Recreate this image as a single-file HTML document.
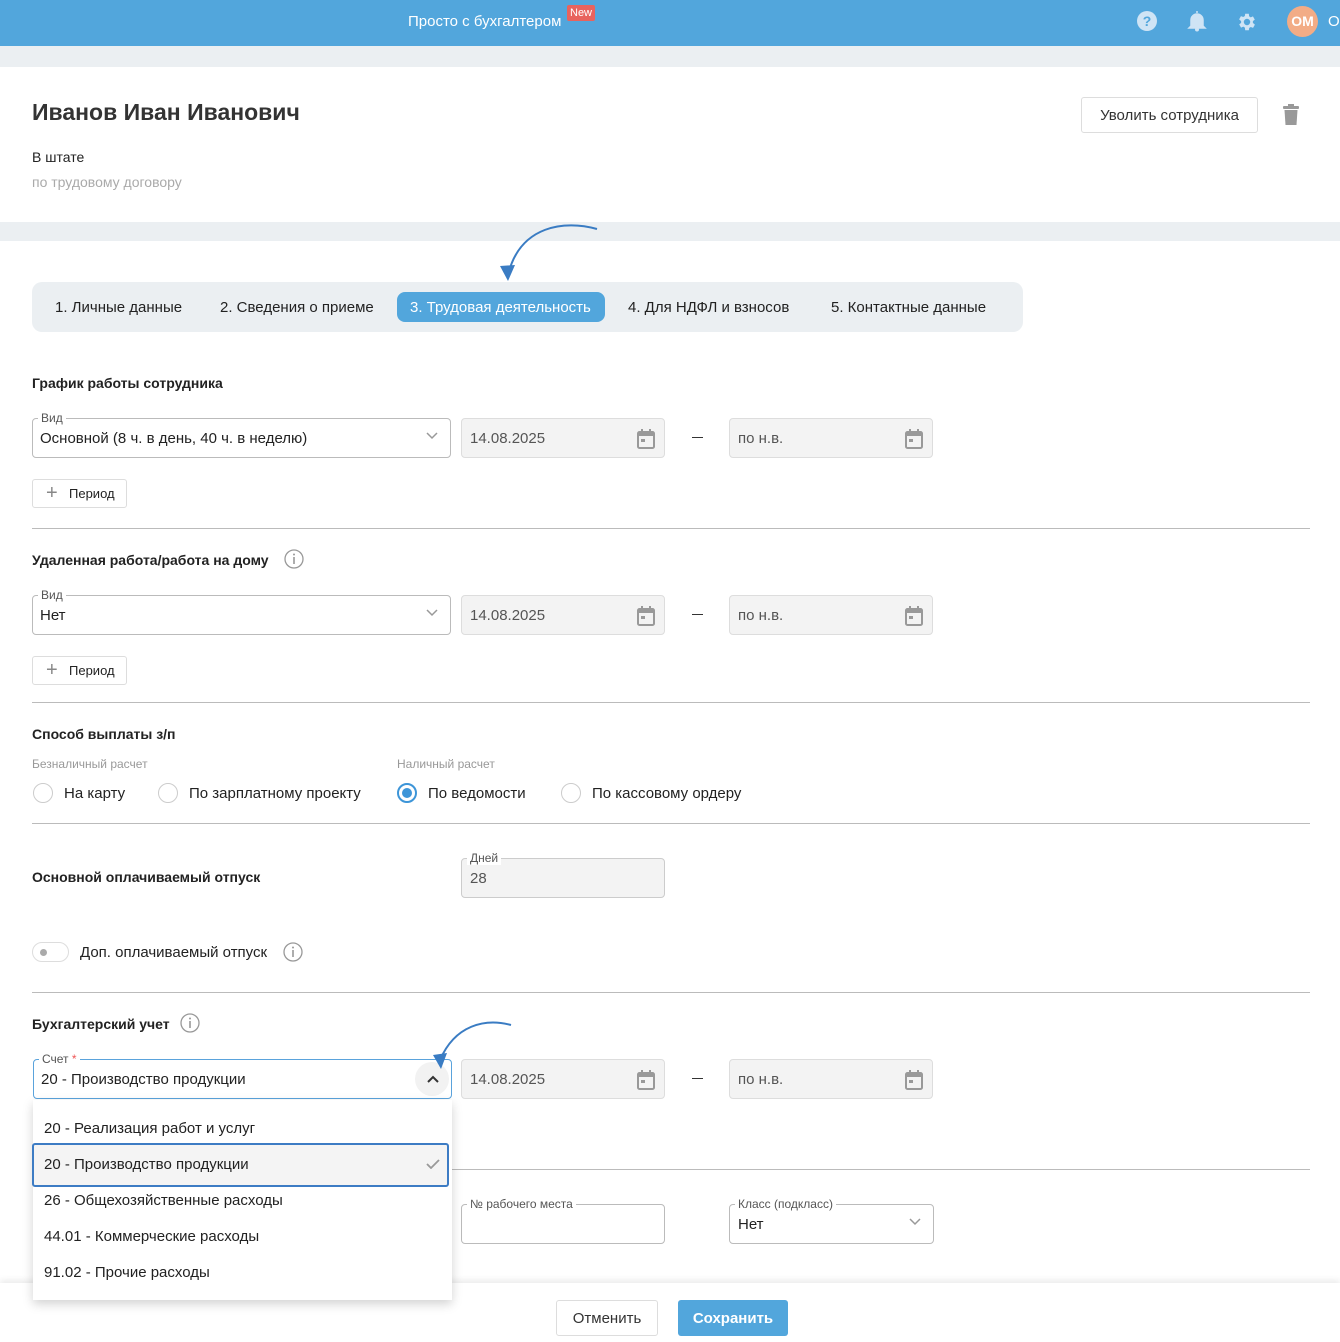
<!DOCTYPE html>
<html><head><meta charset="utf-8"><style>
*{box-sizing:border-box;margin:0;padding:0}
body{width:1340px;height:1342px;position:relative;overflow:hidden;background:#fff;font-family:"Liberation Sans",Arial,sans-serif;color:#222;font-size:15px}
.a{position:absolute}
.hdr{left:0;top:0;width:1340px;height:46px;background:#52a6dc}
.band{left:0;width:1340px;background:#ebeff2}
.h{font-weight:bold;font-size:14px;color:#222}
.sel{border:1px solid #bbb;border-radius:4px;background:#fff}
.lbl{font-size:12px;color:#555;background:#fff;padding:0 3px;position:absolute;top:-8px;left:5px;line-height:14px}
.date{border:1px solid #ddd;border-radius:4px;background:#f3f3f3;width:204px;height:40px}
.date span{position:absolute;left:8px;top:11px;color:#555;font-size:15px}
.cal{position:absolute;right:9px;top:10px}
.div{height:1px;background:#bbb;left:32px;width:1278px}
.per{border:1px solid #ddd;border-radius:3px;width:95px;height:29px;font-size:13px}
.per i{position:absolute;left:13px;top:6px;font-style:normal;color:#888;font-size:20px;line-height:14px}
.per span{position:absolute;left:36px;top:6px}
.chev{position:absolute;right:12px;top:13px}
.radio{width:20px;height:20px;border:1px solid #ccc;border-radius:50%}
.sub{font-size:12px;color:#999}
.tab{top:292px;height:30px;line-height:31px;font-size:15px;padding:0 13px;border-radius:8px}
.dash{width:11px;height:1px;background:#333}
</style></head><body>
<div class="a hdr"></div>
<div class="a" style="left:408px;top:13px;color:#fff;font-size:15px">Просто с бухгалтером</div>
<div class="a" style="left:567px;top:5px;background:#e8635e;color:#fff;font-size:11px;padding:1px 3px;border-radius:2px;line-height:14px">New</div>
<svg class="a" style="left:1136px;top:10px" width="22" height="22"><circle cx="11" cy="11" r="10" fill="#cfe4f5"/><text x="11" y="16" font-size="14" font-weight="bold" text-anchor="middle" fill="#52a6dc" font-family="Liberation Sans">?</text></svg>
<svg class="a" style="left:1187px;top:10px" width="20" height="22"><path d="M10 1v2M4 16V10a6 6 0 0 1 12 0v6l2 2H2z" fill="#cfe4f5" stroke="#cfe4f5" stroke-width="1.5"/><circle cx="10" cy="19.5" r="2" fill="#cfe4f5"/></svg>
<svg class="a" style="left:1236px;top:11px" width="22" height="22" viewBox="0 0 24 24"><path fill="#cfe4f5" d="M19.4 13a7.5 7.5 0 0 0 0-2l2.1-1.6-2-3.5-2.5 1a7 7 0 0 0-1.7-1L15 3h-4l-.4 2.6a7 7 0 0 0-1.7 1l-2.5-1-2 3.5L6.6 11a7.5 7.5 0 0 0 0 2l-2.1 1.6 2 3.5 2.5-1a7 7 0 0 0 1.7 1L11 21h4l.4-2.6a7 7 0 0 0 1.7-1l2.5 1 2-3.5zM13 15.5a3.5 3.5 0 1 1 0-7 3.5 3.5 0 0 1 0 7z" transform="translate(-1 0)"/></svg>
<div class="a" style="left:1287px;top:6px;width:31px;height:31px;border-radius:50%;background:#f2ac86;color:#fff;font-weight:bold;font-size:14px;text-align:center;line-height:31px">OM</div>
<div class="a" style="left:1328px;top:13px;color:#fff;font-size:15px">О</div>

<div class="a band" style="top:46px;height:21px"></div>
<div class="a band" style="top:222px;height:19px"></div>

<div class="a" style="left:32px;top:99px;font-size:23px;font-weight:bold;color:#333">Иванов Иван Иванович</div>
<div class="a" style="left:32px;top:149px;font-size:14px">В штате</div>
<div class="a" style="left:32px;top:174px;font-size:14px;color:#aaa">по трудовому договору</div>
<div class="a" style="left:1081px;top:97px;width:177px;height:36px;border:1px solid #ddd;border-radius:3px;text-align:center;line-height:35px;font-size:15px;color:#333">Уволить сотрудника</div>
<svg class="a" style="left:1282px;top:104px" width="18" height="22"><rect x="1" y="2" width="16" height="3" rx="1" fill="#999"/><rect x="6" y="0" width="6" height="3" fill="#999"/><path d="M2.5 6h13l-1 15h-11z" fill="#999"/></svg>

<svg class="a" style="left:495px;top:220px" width="110" height="65"><path d="M102 9C70 0 25 5 13 55" fill="none" stroke="#3a7cc3" stroke-width="2"/><path d="M5 46l8 15 7-16z" fill="#3a7cc3"/></svg>

<div class="a" style="left:32px;top:282px;width:991px;height:50px;background:#ebeff2;border-radius:10px"></div>
<div class="a tab" style="left:42px">1. Личные данные</div>
<div class="a tab" style="left:207px">2. Сведения о приеме</div>
<div class="a tab" style="left:397px;width:208px;background:#52a6dc;color:#fff">3. Трудовая деятельность</div>
<div class="a tab" style="left:615px">4. Для НДФЛ и взносов</div>
<div class="a tab" style="left:818px">5. Контактные данные</div>

<div class="a h" style="left:32px;top:375px">График работы сотрудника</div>
<div class="a sel" style="left:32px;top:418px;width:419px;height:40px"><div class="lbl">Вид</div><span style="position:absolute;left:7px;top:11px">Основной (8 ч. в день, 40 ч. в неделю)</span><svg class="chev" width="12" height="8"><path d="M1 1l5 5 5-5" fill="none" stroke="#999" stroke-width="1.5"/></svg></div>
<div class="a date" style="left:461px;top:418px"><span>14.08.2025</span><svg class="cal" width="18" height="20"><rect x="1" y="3" width="16" height="16" rx="1.5" fill="none" stroke="#999" stroke-width="2"/><rect x="1" y="3" width="16" height="4" fill="#999"/><rect x="4" y="0" width="2" height="4" fill="#999"/><rect x="12" y="0" width="2" height="4" fill="#999"/><rect x="4" y="10" width="4" height="3" fill="#999"/></svg></div>
<div class="a dash" style="left:692px;top:437px"></div>
<div class="a date" style="left:729px;top:418px"><span>по н.в.</span><svg class="cal" width="18" height="20"><rect x="1" y="3" width="16" height="16" rx="1.5" fill="none" stroke="#999" stroke-width="2"/><rect x="1" y="3" width="16" height="4" fill="#999"/><rect x="4" y="0" width="2" height="4" fill="#999"/><rect x="12" y="0" width="2" height="4" fill="#999"/><rect x="4" y="10" width="4" height="3" fill="#999"/></svg></div>
<div class="a per" style="left:32px;top:479px"><i>+</i><span>Период</span></div>
<div class="a div" style="top:528px"></div>

<div class="a h" style="left:32px;top:552px">Удаленная работа/работа на дому</div>
<svg class="a" style="left:284px;top:549px" width="20" height="20"><circle cx="10" cy="10" r="9" fill="none" stroke="#999" stroke-width="1.3"/><rect x="9.2" y="8" width="1.6" height="7" fill="#999"/><circle cx="10" cy="5.5" r="1" fill="#999"/></svg>
<div class="a sel" style="left:32px;top:595px;width:419px;height:40px"><div class="lbl">Вид</div><span style="position:absolute;left:7px;top:11px">Нет</span><svg class="chev" width="12" height="8"><path d="M1 1l5 5 5-5" fill="none" stroke="#999" stroke-width="1.5"/></svg></div>
<div class="a date" style="left:461px;top:595px"><span>14.08.2025</span><svg class="cal" width="18" height="20"><rect x="1" y="3" width="16" height="16" rx="1.5" fill="none" stroke="#999" stroke-width="2"/><rect x="1" y="3" width="16" height="4" fill="#999"/><rect x="4" y="0" width="2" height="4" fill="#999"/><rect x="12" y="0" width="2" height="4" fill="#999"/><rect x="4" y="10" width="4" height="3" fill="#999"/></svg></div>
<div class="a dash" style="left:692px;top:614px"></div>
<div class="a date" style="left:729px;top:595px"><span>по н.в.</span><svg class="cal" width="18" height="20"><rect x="1" y="3" width="16" height="16" rx="1.5" fill="none" stroke="#999" stroke-width="2"/><rect x="1" y="3" width="16" height="4" fill="#999"/><rect x="4" y="0" width="2" height="4" fill="#999"/><rect x="12" y="0" width="2" height="4" fill="#999"/><rect x="4" y="10" width="4" height="3" fill="#999"/></svg></div>
<div class="a per" style="left:32px;top:656px"><i>+</i><span>Период</span></div>
<div class="a div" style="top:702px"></div>

<div class="a h" style="left:32px;top:726px">Способ выплаты з/п</div>
<div class="a sub" style="left:32px;top:757px">Безналичный расчет</div>
<div class="a sub" style="left:397px;top:757px">Наличный расчет</div>
<div class="a radio" style="left:33px;top:783px"></div><div class="a" style="left:64px;top:785px">На карту</div>
<div class="a radio" style="left:158px;top:783px"></div><div class="a" style="left:189px;top:785px">По зарплатному проекту</div>
<div class="a radio" style="left:397px;top:783px;border:2px solid #3d95d8"><div style="position:absolute;left:3px;top:3px;width:10px;height:10px;border-radius:50%;background:#3d95d8"></div></div><div class="a" style="left:428px;top:785px">По ведомости</div>
<div class="a radio" style="left:561px;top:783px"></div><div class="a" style="left:592px;top:785px">По кассовому ордеру</div>
<div class="a div" style="top:823px"></div>

<div class="a h" style="left:32px;top:869px">Основной оплачиваемый отпуск</div>
<div class="a date" style="left:461px;top:858px;border-color:#ccc"><div class="lbl" style="color:#555">Дней</div><span style="top:11px">28</span></div>
<div class="a" style="left:32px;top:942px;width:37px;height:20px;border:1px solid #ddd;border-radius:10px"><div style="position:absolute;left:7px;top:6px;width:7px;height:7px;border-radius:50%;background:#aaa"></div></div>
<div class="a" style="left:80px;top:944px">Доп. оплачиваемый отпуск</div>
<svg class="a" style="left:283px;top:942px" width="20" height="20"><circle cx="10" cy="10" r="9" fill="none" stroke="#999" stroke-width="1.3"/><rect x="9.2" y="8" width="1.6" height="7" fill="#999"/><circle cx="10" cy="5.5" r="1" fill="#999"/></svg>
<div class="a div" style="top:992px"></div>

<div class="a h" style="left:32px;top:1016px">Бухгалтерский учет</div>
<svg class="a" style="left:180px;top:1013px" width="20" height="20"><circle cx="10" cy="10" r="9" fill="none" stroke="#999" stroke-width="1.3"/><rect x="9.2" y="8" width="1.6" height="7" fill="#999"/><circle cx="10" cy="5.5" r="1" fill="#999"/></svg>
<div class="a sel" style="left:33px;top:1059px;width:419px;height:40px;border-color:#5aa3dc"><div class="lbl">Счет <span style="color:#e55">*</span></div><span style="position:absolute;left:7px;top:11px">20 - Производство продукции</span><div style="position:absolute;right:2px;top:2px;width:34px;height:34px;border-radius:50%;background:#f2f2f2"></div><svg class="chev" width="12" height="8" style="top:15px;right:12px"><path d="M1 7l5-5 5 5" fill="none" stroke="#333" stroke-width="2"/></svg></div>
<svg class="a" style="left:425px;top:1015px" width="95" height="60"><path d="M86 10C60 3 30 10 15 45" fill="none" stroke="#3a7cc3" stroke-width="2"/><path d="M8 40l8 14 6-16z" fill="#3a7cc3"/></svg>
<div class="a date" style="left:461px;top:1059px"><span>14.08.2025</span><svg class="cal" width="18" height="20"><rect x="1" y="3" width="16" height="16" rx="1.5" fill="none" stroke="#999" stroke-width="2"/><rect x="1" y="3" width="16" height="4" fill="#999"/><rect x="4" y="0" width="2" height="4" fill="#999"/><rect x="12" y="0" width="2" height="4" fill="#999"/><rect x="4" y="10" width="4" height="3" fill="#999"/></svg></div>
<div class="a dash" style="left:692px;top:1078px"></div>
<div class="a date" style="left:729px;top:1059px"><span>по н.в.</span><svg class="cal" width="18" height="20"><rect x="1" y="3" width="16" height="16" rx="1.5" fill="none" stroke="#999" stroke-width="2"/><rect x="1" y="3" width="16" height="4" fill="#999"/><rect x="4" y="0" width="2" height="4" fill="#999"/><rect x="12" y="0" width="2" height="4" fill="#999"/><rect x="4" y="10" width="4" height="3" fill="#999"/></svg></div>
<div class="a div" style="top:1169px"></div>

<div class="a sel" style="left:461px;top:1204px;width:204px;height:40px"><div class="lbl">№ рабочего места</div></div>
<div class="a sel" style="left:729px;top:1204px;width:205px;height:40px"><div class="lbl">Класс (подкласс)</div><span style="position:absolute;left:8px;top:11px">Нет</span><svg class="chev" width="12" height="8"><path d="M1 1l5 5 5-5" fill="none" stroke="#999" stroke-width="1.5"/></svg></div>

<div class="a" style="left:0;top:1283px;width:1340px;height:59px;background:#fff;box-shadow:0 -3px 6px rgba(0,0,0,.08)"></div>
<div class="a" style="left:556px;top:1300px;width:102px;height:36px;border:1px solid #ddd;border-radius:3px;text-align:center;line-height:35px;font-size:15px;color:#333">Отменить</div>
<div class="a" style="left:678px;top:1300px;width:110px;height:36px;background:#52a6dc;border-radius:3px;text-align:center;line-height:37px;font-size:15px;color:#fff;font-weight:bold">Сохранить</div>

<div class="a" style="left:33px;top:1100px;width:419px;height:200px;background:#fff;box-shadow:0 4px 10px rgba(0,0,0,.18)"></div>
<div class="a" style="left:44px;top:1120px">20 - Реализация работ и услуг</div>
<div class="a" style="left:32px;top:1143px;width:417px;height:44px;background:#f4f4f4;border:2px solid #3d7cc4;border-radius:3px"></div>
<div class="a" style="left:44px;top:1156px">20 - Производство продукции</div>
<svg class="a" style="left:426px;top:1158px" width="14" height="11"><path d="M1 6l4 4 8-8" fill="none" stroke="#999" stroke-width="1.8"/></svg>
<div class="a" style="left:44px;top:1192px">26 - Общехозяйственные расходы</div>
<div class="a" style="left:44px;top:1228px">44.01 - Коммерческие расходы</div>
<div class="a" style="left:44px;top:1264px">91.02 - Прочие расходы</div>
</body></html>
